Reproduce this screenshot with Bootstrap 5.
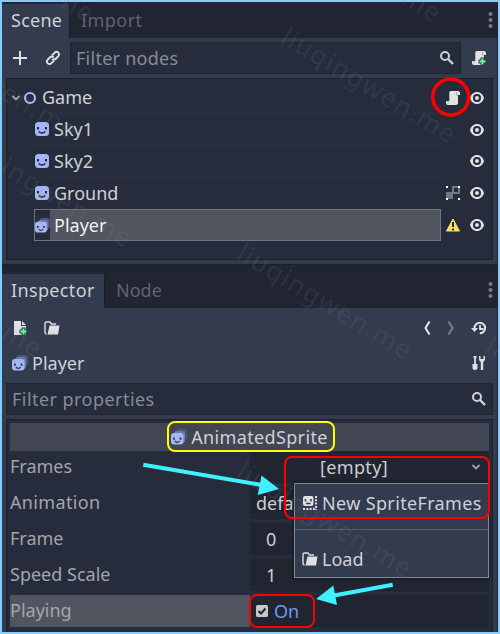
<!DOCTYPE html>
<html lang="en" data-bs-theme="dark">
<head>
<meta charset="utf-8">
<meta name="viewport" content="width=device-width, initial-scale=1">
<title>Scene and Inspector</title>
<link rel="stylesheet" href="https://cdn.jsdelivr.net/npm/bootstrap@5.3.0/dist/css/bootstrap.min.css">
<style>
body{margin:0;background:#86ccff;font-family:"Noto Sans",sans-serif;font-size:18px;line-height:24px;color:#d0d1d5;overflow:hidden}
svg{display:block;flex:none}
.editor{width:500px;height:634px;padding:2px;position:relative}
.dock{background:#333b4f;border-right:1px solid #1d222d}
.scene-dock{height:262px}
.inspector-dock{height:368px}
.tabs{background:#202531;flex:none}
.scene-dock .tabs{height:36px;padding-top:2px}
.inspector-dock .tabs{height:44px;padding-top:9px;border-top:1px solid #1a1e28}
.tab-on{background:#333b4f;border-right:1px solid #1a1e28;padding:0 9px 2px}
.scene-dock .tab-on{width:68px}
.inspector-dock .tab-on{width:103px}
.inspector-dock .tab-on,.inspector-dock .tab-off{padding-bottom:3px}
.tab-off{color:#5f636d;padding:0 0 2px 11px}
.field{background:#262c3b;border:1px solid #1f2430;color:#868b95;height:32px}
.tree{background:#262c3b;border:1px solid #1c212c;margin:4px 4px 0 4px;height:182px;width:487px;padding-top:3px;flex:none}
.node{height:31.8px;padding-right:7px}
.node-line{height:32px;border-bottom:1px solid #2d3342}
.kid{margin-left:27px}
.picked{background:#515560;border:1px solid #70747e;color:#f0f0f2;width:407px}
.picked-icon{background:#262c3b;width:15px;height:30px}
.props{background:#262c3b;border:1px solid #1c212c;border-bottom:0;margin:4px 4px 0;height:213px;width:487px;padding:3px;flex:none}
.category{background:#424653;height:28px}
.prop{height:36px;color:#a2a5ac}
.prop-name{width:240px;height:32px;line-height:31px}
.prop-value{background:#202531;height:32px;color:#cdced2;padding-bottom:1px}
.hot{background:#515560}
.popup{position:absolute;left:294px;top:483px;width:195px;height:95px;background:#333b4f;border:1px solid #838891;box-shadow:0 0 2px 1px #181c25}
.popup hr{margin:0;border-color:#535c72;opacity:1}
.ls-1{letter-spacing:.25px}
.ls-2{letter-spacing:.35px}
.ls-3{letter-spacing:.45px}
.marks{position:absolute;left:0;top:0;pointer-events:none}
.wm text{font-size:26px;letter-spacing:1.4px;fill:#8790a3;fill-opacity:.14}
</style>
<script src="https://cdn.jsdelivr.net/npm/bootstrap@5.3.0/dist/js/bootstrap.bundle.min.js"></script>
</head>
<body>
<svg width="0" height="0" class="position-absolute">
<defs>
<symbol id="eye" viewBox="0 0 16 16"><path d="M8 2C4.500 2 2 4.500 1 8c1 3.500 3.500 6 7 6s6-2.500 7-6c-1-3.500-3.500-6-7-6zm0 2a4 4 0 1 1 0 8 4 4 0 0 1 0-8zm0 2a2 2 0 1 0 0 4 2 2 0 0 0 0-4z" fill="#e0e0e0" fill-rule="evenodd"/></symbol>
<symbol id="sprite" viewBox="0 0 16 16"><rect x="1" y="1" width="14" height="14" rx="3.500" fill="#a5b7f3"/><path d="M4 6v2.500M12 6v2.500" stroke="#262c3b" stroke-width="2"/><path d="M5 10.300c1 2.200 5 2.200 6 0" fill="none" stroke="#262c3b" stroke-width="1.600"/></symbol>
<symbol id="anim" viewBox="0 0 16 16"><rect x="5" y="0" width="11" height="11" rx="3" fill="#4b5780"/><rect x="3" y="2" width="11" height="12" rx="3" fill="#6b79a8"/><rect x="0" y="4" width="12.500" height="11.500" rx="3" fill="#a5b7f3"/><path d="M3 8.500v2.200M9.500 8.500v2.200" stroke="#262c3b" stroke-width="1.600"/><path d="M4 12c1 1.700 3.500 1.700 4.500 0" fill="none" stroke="#262c3b" stroke-width="1.300"/></symbol>
<symbol id="lens" viewBox="0 0 16 16"><circle cx="6" cy="6" r="4" fill="none" stroke="#d0d1d4" stroke-width="2"/><path d="M9 9l5 5" stroke="#d0d1d4" stroke-width="2.400"/></symbol>
<symbol id="script" viewBox="0 0 16 16"><path d="M6 1c-1 0-1.700.7-1.700 1.700V11H1v2c0 1.200.8 2 2 2h8c1.200 0 2-.8 2-2V5h2V3c0-1.200-.8-2-2-2z" fill="#e3e3e3"/><path d="M3 11v2.500M11.500 2v3H13" fill="none" stroke="#a9abb0" stroke-width="1"/></symbol>
<symbol id="folder" viewBox="0 0 16 16"><path d="M2.500 14C1.500 14 1 13 1 12V3.500C1 2.500 1.500 2 2.500 2H6l1.500 2H12" fill="none" stroke="#e0e0e0" stroke-width="1.400"/><path d="M5.500 5.500H15.500L14 14.500H3.500z" fill="#e0e0e0"/></symbol>
<symbol id="dots" viewBox="0 0 5 16"><g fill="#777c86"><circle cx="2.500" cy="2" r="2"/><circle cx="2.500" cy="8" r="2"/><circle cx="2.500" cy="14" r="2"/></g></symbol>
<symbol id="down" viewBox="0 0 10 8"><path d="M1.500 2L5 5.500 8.500 2" fill="none" stroke="#a0a3aa" stroke-width="1.800"/></symbol>
</defs></svg>
<main class="editor">
<section class="dock scene-dock d-flex flex-column">
  <div class="tabs d-flex">
    <div class="tab-on d-flex align-items-center ls-1">Scene</div>
    <div class="tab-off d-flex align-items-center ls-3">Import</div>
    <svg class="ms-auto me-1 mt-2" width="5" height="16"><use href="#dots"/></svg>
  </div>
  <div class="d-flex align-items-center" style="margin-top:4px">
    <div class="d-flex align-items-center" style="width:68px;padding-left:10px;gap:17px">
      <svg width="16" height="16" viewBox="0 0 16 16"><path d="M8 1v14M1 8h14" stroke="#e0e0e0" stroke-width="2"/></svg>
      <svg width="16" height="16" viewBox="0 0 16 16"><g transform="rotate(-45 8 8)" fill="none" stroke="#e0e0e0" stroke-width="1.900"><path d="M7 10.500H3a2.500 2.500 0 0 1 0-5h3.500A2.500 2.500 0 0 1 9 8"/><path d="M9 5.500h4a2.500 2.500 0 0 1 0 5H9.500A2.500 2.500 0 0 1 7 8"/></g></svg>
    </div>
    <div class="field d-flex align-items-center justify-content-between" style="width:391px;padding:0 5px"><span class="ls-1">Filter nodes</span><svg width="16" height="16"><use href="#lens"/></svg></div>
    <svg width="16" height="16" style="margin-left:10px" viewBox="0 0 16 16"><use href="#script" width="16" height="16"/><path d="M11.500 7.500v8M7.500 11.500h8" stroke="#333b4f" stroke-width="4"/><path d="M11.500 8.500v6M8.500 11.500h6" stroke="#5fff97" stroke-width="2"/></svg>
  </div>
  <div class="tree">
    <div class="node d-flex align-items-center">
      <svg width="10" height="8" style="margin-left:4px"><use href="#down"/></svg>
      <svg width="14" height="14" viewBox="0 0 14 14" style="margin-left:2px"><circle cx="7" cy="7" r="5" fill="none" stroke="#a5b7f3" stroke-width="2.200"/></svg>
      <span class="node-line flex-grow-1 d-flex align-items-center" style="padding-left:5px">Game</span>
      <svg width="16" height="16"><use href="#script"/></svg><svg width="16" height="16" style="margin-left:8px"><use href="#eye"/></svg>
    </div>
    <div class="node d-flex align-items-center"><div class="kid node-line d-flex align-items-center flex-grow-1" style="gap:4px"><svg width="16" height="16"><use href="#sprite"/></svg>Sky1</div><svg width="16" height="16" style="margin-left:24px"><use href="#eye"/></svg></div>
    <div class="node d-flex align-items-center"><div class="kid node-line d-flex align-items-center flex-grow-1" style="gap:4px"><svg width="16" height="16"><use href="#sprite"/></svg>Sky2</div><svg width="16" height="16" style="margin-left:24px"><use href="#eye"/></svg></div>
    <div class="node d-flex align-items-center"><div class="kid d-flex align-items-center flex-grow-1" style="gap:4px"><svg width="16" height="16"><use href="#sprite"/></svg>Ground</div>
      <svg width="16" height="16" viewBox="0 0 16 16"><path d="M1 7h7v7H1z" fill="#73777f"/><path d="M8 2h6v6H8z" fill="none" stroke="#73777f" stroke-width="2"/><path d="M1 1h2v2H1zM13 1h2v2h-2zM1 13h2v2H1zM13 13h2v2h-2z" fill="#fff"/></svg>
      <svg width="16" height="16" style="margin-left:8px"><use href="#eye"/></svg></div>
    <div class="node d-flex align-items-center"><div class="kid picked d-flex align-items-center h-100" style="gap:4px"><div class="picked-icon d-flex align-items-center"><svg width="15" height="15"><use href="#anim"/></svg></div>Player</div>
      <svg width="16" height="16" viewBox="0 0 16 16" class="ms-auto"><path d="M8 2L14.500 14H1.500z" fill="#ffdd65" stroke="#ffdd65" stroke-linejoin="round"/><path d="M8 5v5M8 11.500v2" stroke="#262c3b" stroke-width="2"/></svg>
      <svg width="16" height="16" style="margin-left:8px"><use href="#eye"/></svg></div>
  </div>
</section>
<section class="dock inspector-dock d-flex flex-column">
  <div class="tabs d-flex">
    <div class="tab-on d-flex align-items-center ls-2">Inspector</div>
    <div class="tab-off d-flex align-items-center">Node</div>
    <svg class="ms-auto me-1" width="5" height="16" style="margin-top:8px"><use href="#dots"/></svg>
  </div>
  <div class="d-flex align-items-center flex-shrink-0" style="height:39px;padding:0 10px">
    <svg width="16" height="16" viewBox="0 0 16 16"><path d="M2 1h7v5h5v9H2z" fill="#e0e0e0"/><path d="M10 1l4 4h-4z" fill="#e0e0e0"/><path d="M11.500 7.500v8M7.500 11.500h8" stroke="#333b4f" stroke-width="4"/><path d="M11.500 8.500v6M8.500 11.500h6" stroke="#5fff97" stroke-width="2"/></svg>
    <svg width="16" height="16" style="margin-left:16px"><use href="#folder"/></svg>
    <svg width="8" height="16" viewBox="0 0 8 16" class="ms-auto"><path d="M6.500 1.500L2.500 8l4 6.500" fill="none" stroke="#e8e8e8" stroke-width="2"/></svg>
    <svg width="8" height="16" viewBox="0 0 8 16" style="margin-left:16px"><path d="M1.500 1.500l4 6.500-4 6.500" fill="none" stroke="#7b808c" stroke-width="2"/></svg>
    <svg width="16" height="16" viewBox="0 0 16 16" style="margin-left:16px"><path d="M3.500 8a5.300 5.300 0 1 1 5.300 5.300" fill="none" stroke="#e0e0e0" stroke-width="2"/><path d="M0 8h7l-3.500 4z" fill="#e0e0e0"/><path d="M9 5v4h3.500" fill="none" stroke="#e0e0e0" stroke-width="1.800"/></svg>
  </div>
  <div class="d-flex align-items-center flex-shrink-0" style="height:32px;padding:0 10px;margin-bottom:2px">
    <svg width="16" height="16"><use href="#anim"/></svg><span style="margin-left:4px">Player</span>
    <svg width="16" height="16" viewBox="0 0 16 16" class="ms-auto"><path d="M4 1.500V9" stroke="#e0e0e0" stroke-width="1.800"/><path d="M2.500 1h3v2h-3zM1.500 9h5v4c0 1.200-1 2-2.500 2s-2.500-.8-2.500-2z" fill="#e0e0e0"/><path d="M11 6v9" stroke="#e0e0e0" stroke-width="2.400"/><path d="M8 1v3c0 2 1.400 3 3 3s3-1 3-3V1h-1.500v3h-3V1z" fill="#e0e0e0"/></svg>
  </div>
  <div class="field d-flex align-items-center justify-content-between flex-shrink-0" style="width:487px;margin:2px 4px 0;padding:0 5px"><span class="ls-3">Filter properties</span><svg width="16" height="16"><use href="#lens"/></svg></div>
  <div class="props">
    <div class="category d-flex align-items-center justify-content-center ls-2"><svg width="16" height="16" style="margin-right:4px"><use href="#anim"/></svg>AnimatedSprite</div>
    <div class="prop d-flex"><div class="prop-name">Frames</div><div class="prop-value ls-2 flex-grow-1 d-flex align-items-center" style="padding-left:70px">[empty]<svg width="10" height="8" class="ms-auto" style="margin-right:8px"><use href="#down"/></svg></div></div>
    <div class="prop d-flex"><div class="prop-name ls-2">Animation</div><div class="prop-value flex-grow-1 d-flex align-items-center" style="padding-left:6px">default</div></div>
    <div class="prop d-flex"><div class="prop-name">Frame</div><div class="prop-value flex-grow-1 d-flex align-items-center" style="padding-left:16px">0</div></div>
    <div class="prop d-flex"><div class="prop-name">Speed Scale</div><div class="prop-value flex-grow-1 d-flex align-items-center" style="padding-left:16px">1</div></div>
    <div class="prop d-flex"><div class="prop-name hot">Playing</div><div class="prop-value flex-grow-1 d-flex align-items-center" style="padding-left:6px"><svg width="12" height="12" viewBox="0 0 12 12"><rect width="12" height="12" rx="1.500" fill="#c6c7ca"/><path d="M2.500 6l2.500 2.500 4.500-5" fill="none" stroke="#202531" stroke-width="2"/></svg><span style="color:#699ce8;margin-left:6px">On</span></div></div>
  </div>
</section>
<div class="popup">
  <div class="d-flex align-items-center ls-2" style="height:38px;padding-left:7px;gap:4px"><svg width="16" height="16" viewBox="0 0 16 16"><rect x="1" y="1" width="10.500" height="10" rx="2" fill="#e0e0e0"/><path d="M3.500 4v2.500M9 4v2.500M4 8.500h4.500" stroke="#333b4f" stroke-width="1.500"/><path d="M14 1v14M1 14h12" stroke="#e0e0e0" stroke-width="2" stroke-dasharray="2 1.300"/></svg>New SpriteFrames</div>
  <hr style="margin-top:7px">
  <div class="d-flex align-items-center" style="height:38px;margin-top:10px;padding-left:7px;gap:4px"><svg width="16" height="16"><use href="#folder"/></svg>Load</div>
</div>
<svg class="marks" width="500" height="634">
  <g class="wm">
    <text transform="translate(279 42) rotate(31)">liuqingwen.me</text>
    <text transform="translate(264 -79) rotate(31)">liuqingwen.me</text>
    <text transform="translate(-83 -79) rotate(31)">liuqingwen.me</text>
    <text transform="translate(-100 38) rotate(31)">liuqingwen.me</text>
    <text transform="translate(-45 146) rotate(31)">liuqingwen.me</text>
    <text transform="translate(235 258) rotate(31)">liuqingwen.me</text>
    <text transform="translate(-135 256) rotate(31)">liuqingwen.me</text>
    <text transform="translate(484 350) rotate(31)">liuqingwen.me</text>
    <text transform="translate(235 476) rotate(31)">liuqingwen.me</text>
  </g>
  <circle cx="450.700" cy="97" r="18" fill="none" stroke="#fe0000" stroke-width="3.500"/>
  <rect x="168" y="422" width="166" height="29" rx="7" fill="none" stroke="#ffff00" stroke-width="2"/>
  <g fill="none" stroke="#fe0000" stroke-width="2"><rect x="285" y="457" width="204" height="61" rx="7"/><rect x="250" y="595" width="64" height="32" rx="7"/></g>
  <g stroke="#40f0ff" stroke-width="4"><path d="M143.300 464.700L262 485M392.700 584.800L334 595.500"/></g>
  <path d="M261.500 475.500L279 489 257.700 495zM333.300 585.500L316 599 337 605z" fill="#40f0ff"/>
</svg>
</main>
</body>
</html>
